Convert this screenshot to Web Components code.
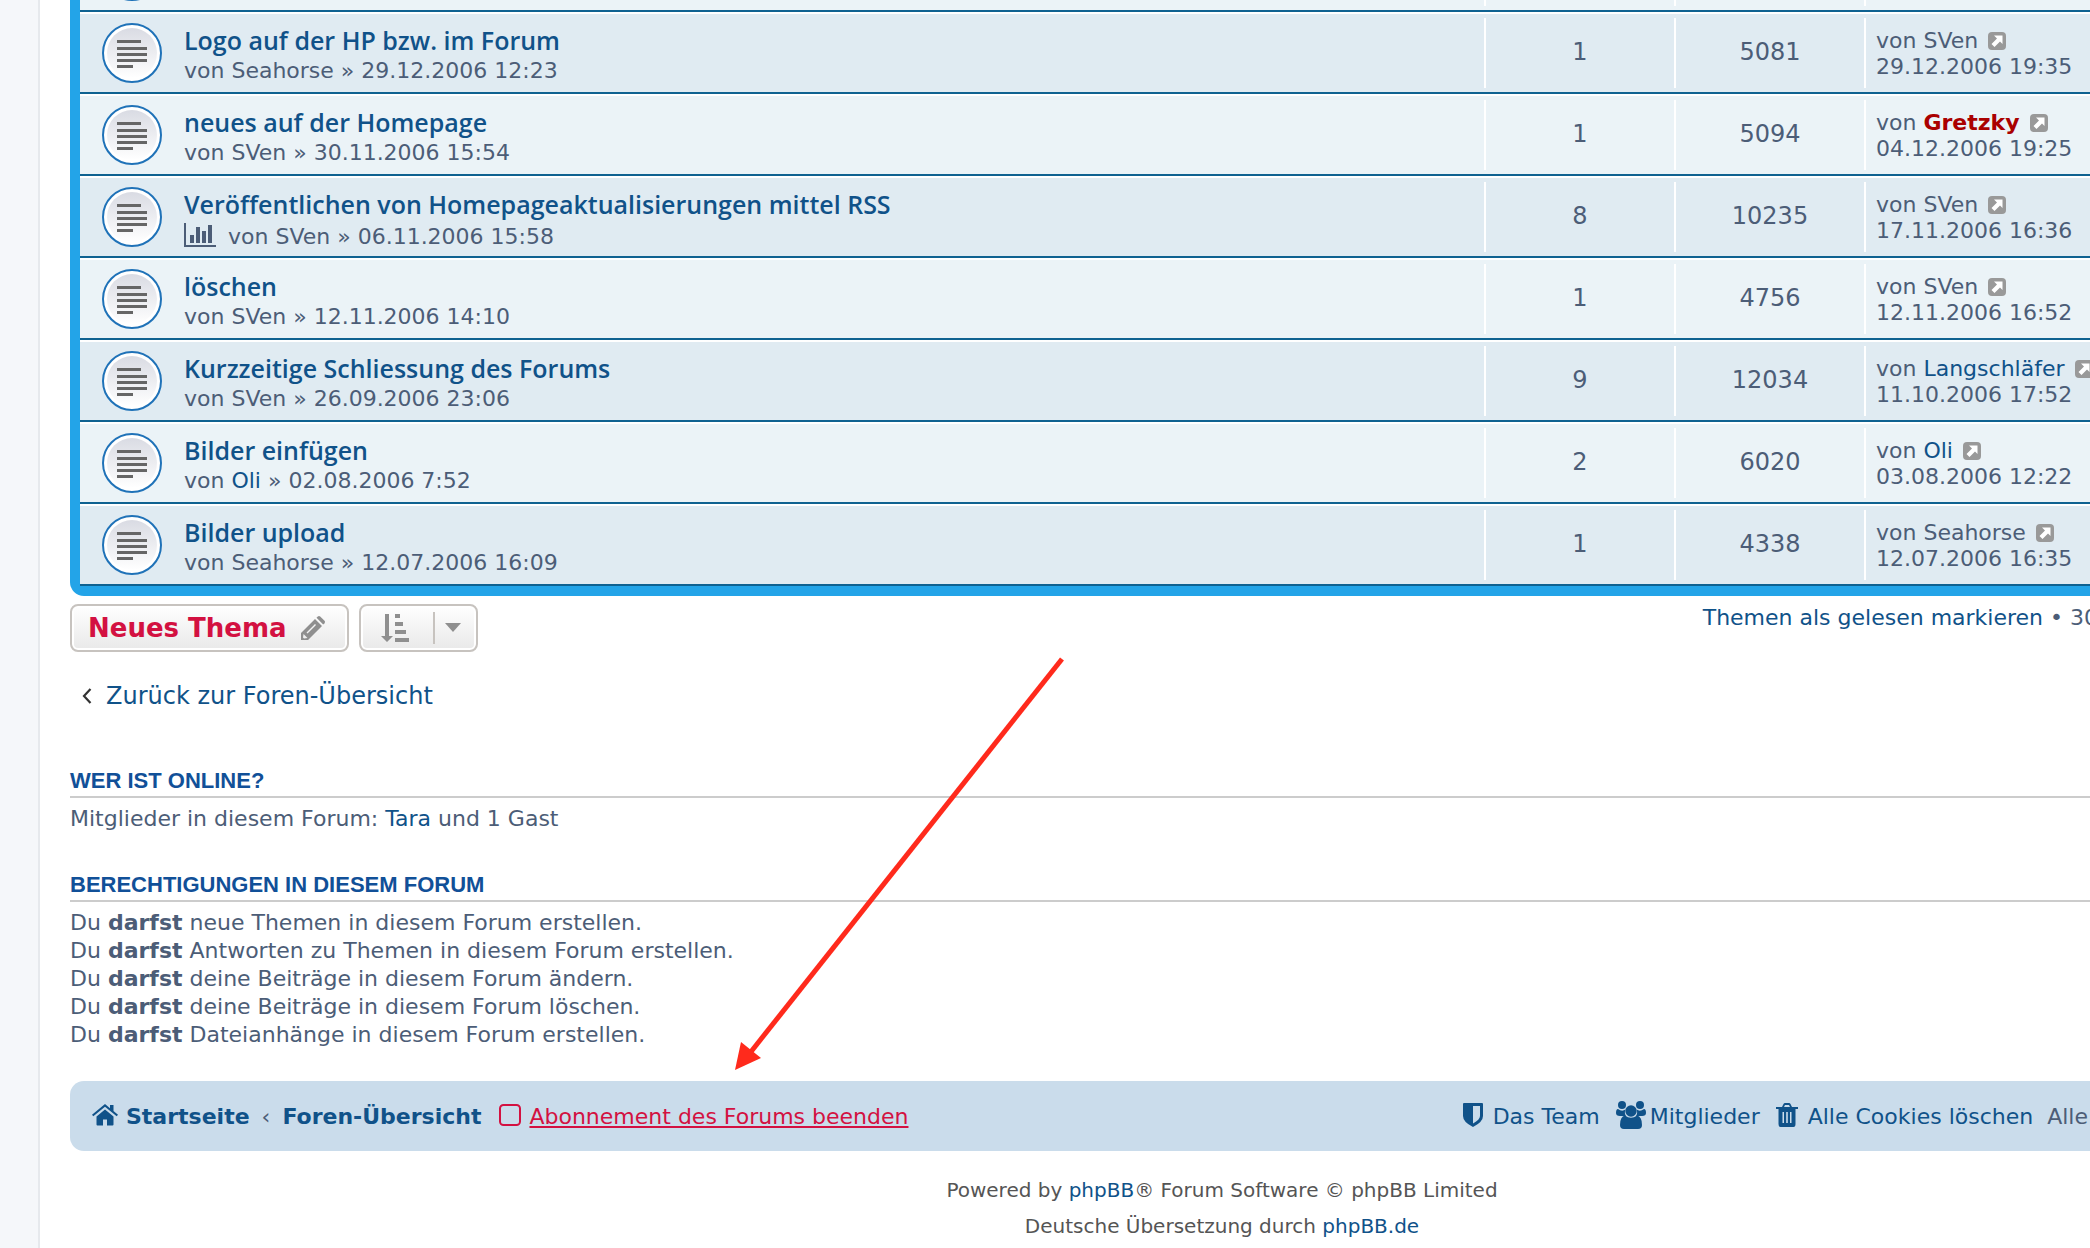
<!DOCTYPE html>
<html lang="de">
<head>
<meta charset="utf-8">
<title>Foren-Übersicht</title>
<style>
    body {
        margin: 0;
        overflow-x: hidden;
        background: #f5f7fa;
        color: #4c5d77;
        font-family: Verdana, "DejaVu Sans", sans-serif;
        font-size: 22px;
        line-height: 28px;
    }
</style>
</head>
<body>
<forum-page>
    <topic-list></topic-list>
    <action-bar></action-bar>
    <back-link href="#index">Zurück zur Foren-Übersicht</back-link>
    <stat-block>
        <span slot="title">Wer ist online?</span>
        Mitglieder in diesem Forum: <a href="#tara">Tara</a> und 1 Gast
    </stat-block>
    <stat-block>
        <span slot="title">Berechtigungen in diesem Forum</span>
        Du <strong>darfst</strong> neue Themen in diesem Forum erstellen.<br>
        Du <strong>darfst</strong> Antworten zu Themen in diesem Forum erstellen.<br>
        Du <strong>darfst</strong> deine Beiträge in diesem Forum ändern.<br>
        Du <strong>darfst</strong> deine Beiträge in diesem Forum löschen.<br>
        Du <strong>darfst</strong> Dateianhänge in diesem Forum erstellen.
    </stat-block>
    <nav-footer></nav-footer>
    <site-credits></site-credits>
    <pointer-arrow slot="overlay"></pointer-arrow>
</forum-page>

<script>
const icons = {
    topic: [60, 60, `
        <defs><linearGradient id="g" x1="0" y1="0" x2="0" y2="1">
            <stop offset="0" stop-color="#d9dbe3"/><stop offset="1" stop-color="#fff"/>
        </linearGradient></defs>
        <circle cx="30" cy="30" r="29" fill="#fff" stroke="#1f72b8" stroke-width="2"/>
        <circle cx="30" cy="30" r="25" fill="url(#g)"/>
        <path d="M15 17h24v3H15zM15 24h30v3H15zM15 30h30v3H15zM15 36h30v3H15zM15 42h16v3H15z" fill="#666"/>`],
    poll: [32, 28, '<path d="M0 0h2v22h30v2H0zM6 12h4v8H6zM12 4h4v16h-4zM18 8h4v12h-4zM24 2h4v18h-4z"/>'],
    external: [18, 18, `
        <rect width="18" height="18" rx="4" fill="#999"/>
        <path d="M6 3.500h8.500V12l-2.500-2.500-5.500 5.500-3-3L9 6.500z" fill="#fff"/>`],
    pencil: [24, 24, `
        <path fill-rule="evenodd" d="M0 24v-7L14 3l7 7L7 24zM2.500 18l-.5 3.500 1 1L6.500 22zM5.500 16.500l1 1 8.500-8.500-1-1z"/>
        <path d="M15.500 1.800 16.800.5q1.200-1 2.400 0L23.500 4.800q1 1.200 0 2.400l-1.300 1.300z"/>`],
    sort: [28, 28, '<path d="M4 0h4v22h4L6 28 0 22h4zM14 0h5v4h-5zM14 8h8v4h-8zM14 16h11v4H14zM14 24h14v4H14z"/>'],
    caret: [16, 10, '<path d="M0 0h16L8 9z"/>'],
    left: [10, 16, '<path d="M8.500 1 2 8l6.500 7" fill="none" stroke="#333" stroke-width="2.200"/>'],
    home: [26, 22, `
        <path d="M13 5.500 4.500 12.500V20.500q0 1 1 1H11v-6h4v6h5.500q1 0 1-1V12.500z"/>
        <path d="M13 0 0 10.800l1.300 1.500L13 2.800l11.700 9.500 1.300-1.500-4.500-3.800V1H18v3.200z"/>`],
    square: [22, 22, '<rect x="1" y="1" width="20" height="20" rx="3.500" fill="none" stroke="currentColor" stroke-width="2"/>'],
    shield: [20, 24, '<path fill-rule="evenodd" d="M1 0h18q1 0 1 1v12q0 6-10 11Q0 19 0 13V1q0-1 1-1zM10 3v17.500q7-4 7-7.500V3z"/>'],
    users: [30, 28, `
        <circle cx="6" cy="4" r="4"/><circle cx="24" cy="4" r="4"/>
        <path d="M2 8q4 3 7.500.5Q8 12 10 15H4q-4 0-4-3 0-4 2-4zM28 8q-4 3-7.500.5Q22 12 20 15h6q4 0 4-3 0-4-2-4z"/>
        <circle cx="15" cy="10" r="5.700"/>
        <path d="M9 14.500q6 4.500 12 0 5 1 5 9.500 0 4-4 4H8q-4 0-4-4 0-8.500 5-9.500z"/>`],
    trash: [22, 24, `
        <path fill-rule="evenodd" d="M2.500 5.500h17V21q0 3-2 3h-13q-2 0-2-3zM6.500 9v11H8V9zM10.200 9v11h1.600V9zM14 9v11h1.500V9z"/>
        <path d="M0 4h6l1.500-3q.5-1 1.500-1h4q1 0 1.500 1L16 4h6v2H0zm8 0h6l-1-2H9z"/>`]
};

const linkStyle = `
    a { color: #105289; text-decoration: none; }
    a:hover { text-decoration: underline; }
`;

class SiteIcon extends HTMLElement {
    constructor() {
        super();
        this.attachShadow({ mode: 'open' });
    }

    connectedCallback() {
        const [width, height, shape] = icons[this.getAttribute('name')];
        this.shadowRoot.innerHTML = `
            <style>
                :host { display: inline-block; flex: none; }
                svg { display: block; fill: currentColor; }
            </style>
            <svg width="${width}" height="${height}" viewBox="0 0 ${width} ${height}" aria-hidden="true">${shape}</svg>
        `;
    }
}

class ForumPage extends HTMLElement {
    constructor() {
        super();
        this.attachShadow({ mode: 'open' }).innerHTML = `
            <style>
                :host {
                    display: block;
                    position: relative;
                    overflow: hidden;
                    margin-left: 38px;
                    padding: 0 0 10px 30px;
                    border-left: 2px solid #e6e9ed;
                    background: #fff;
                }
            </style>
            <slot></slot>
            <slot name="overlay"></slot>
        `;
    }
}

const user = (name, color) => color ? `<a href="#user" style="color: ${color}; font-weight: bold">${name}</a>` : `<a href="#user">${name}</a>`;

const topics = [
    {},
    { title: 'Logo auf der HP bzw. im Forum', author: 'Seahorse', date: '29.12.2006 12:23', replies: 1, views: 5081, last: 'SVen', lastDate: '29.12.2006 19:35' },
    { title: 'neues auf der Homepage', author: 'SVen', date: '30.11.2006 15:54', replies: 1, views: 5094, last: user('Gretzky', '#aa0000'), lastDate: '04.12.2006 19:25' },
    { title: 'Veröffentlichen von Homepageaktualisierungen mittel RSS', poll: true, author: 'SVen', date: '06.11.2006 15:58', replies: 8, views: 10235, last: 'SVen', lastDate: '17.11.2006 16:36' },
    { title: 'löschen', author: 'SVen', date: '12.11.2006 14:10', replies: 1, views: 4756, last: 'SVen', lastDate: '12.11.2006 16:52' },
    { title: 'Kurzzeitige Schliessung des Forums', author: 'SVen', date: '26.09.2006 23:06', replies: 9, views: 12034, last: user('Langschläfer'), lastDate: '11.10.2006 17:52' },
    { title: 'Bilder einfügen', author: user('Oli'), date: '02.08.2006 7:52', replies: 2, views: 6020, last: user('Oli'), lastDate: '03.08.2006 12:22' },
    { title: 'Bilder upload', author: 'Seahorse', date: '12.07.2006 16:09', replies: 1, views: 4338, last: 'Seahorse', lastDate: '12.07.2006 16:35' }
];

class TopicList extends HTMLElement {
    constructor() {
        super();
        this.attachShadow({ mode: 'open' }).innerHTML = `
            <style>
                ${linkStyle}
                /* the list is scrolled, only the foot of the first row shows */
                :host {
                    display: block;
                    margin-top: -70px;
                    border-left: 10px solid #23a4e8;
                    border-bottom: 10px solid #23a4e8;
                    border-bottom-left-radius: 14px;
                }
                table { width: 100%; table-layout: fixed; border-spacing: 0; }
                .narrow { width: 190px; }
                .last { width: 226px; }
                td {
                    height: 70px;
                    padding: 4px 0;
                    border-top: 2px solid #fff;
                    border-bottom: 2px solid #0f6291;
                    background: #ebf3f7;
                }
                tr:nth-child(even) td { background: #e0ebf2; }
                .cell {
                    box-sizing: border-box;
                    height: 70px;
                    border-left: 2px solid #fff;
                    white-space: nowrap;
                }
                .count { font-size: 24px; line-height: 68px; text-align: center; }
                .post { padding: 10px 0 0 10px; line-height: 26px; }
                .post site-icon { margin-left: 3px; vertical-align: -2px; }
                .topic { display: flex; align-items: center; gap: 22px; height: 70px; padding-left: 22px; }
                .text { align-self: flex-start; padding-top: 8px; }
                .title { display: block; font: 650 25px/28px "Trebuchet MS", "Open Sans", sans-serif; }
                .by { display: flex; align-items: center; gap: 12px; margin-top: 3px; }
                .poll { height: 32px; }
            </style>
            <table>
                <colgroup><col><col class="narrow"><col class="narrow"><col class="last"></colgroup>
                <tbody>${topics.map(topic => this.row(topic)).join('')}</tbody>
            </table>
        `;
    }

    row(t) {
        if (!t.title) {
            return `
                <tr>
                    <td><div class="topic"><site-icon name="topic"></site-icon></div></td>
                    <td><div class="cell"></div></td>
                    <td><div class="cell"></div></td>
                    <td><div class="cell"></div></td>
                </tr>`;
        }
        return `
            <tr>
                <td>
                    <div class="topic">
                        <site-icon name="topic"></site-icon>
                        <div class="text">
                            <a class="title" href="#topic">${t.title}</a>
                            <div class="by ${t.poll ? 'poll' : ''}">
                                ${t.poll ? '<site-icon name="poll"></site-icon>' : ''}
                                <span>von ${t.author} » ${t.date}</span>
                            </div>
                        </div>
                    </div>
                </td>
                <td><div class="cell count">${t.replies}</div></td>
                <td><div class="cell count">${t.views}</div></td>
                <td>
                    <div class="cell post">
                        von ${t.last} <a href="#last" aria-label="Neuester Beitrag"><site-icon name="external"></site-icon></a><br>
                        ${t.lastDate}
                    </div>
                </td>
            </tr>`;
    }
}

class ActionBar extends HTMLElement {
    constructor() {
        super();
        this.attachShadow({ mode: 'open' }).innerHTML = `
            <style>
                ${linkStyle}
                :host { display: flex; align-items: flex-start; gap: 10px; margin-top: 8px; }
                button {
                    display: flex;
                    align-items: center;
                    box-sizing: border-box;
                    height: 48px;
                    padding: 0 16px;
                    border: 2px solid #c7c3bf;
                    border-radius: 8px;
                    background: linear-gradient(#fff, #e9e9e9);
                    box-shadow: inset 0 0 0 2px #fff;
                    color: #8f8f8f;
                    font: bold 26px/28px Verdana, "DejaVu Sans", sans-serif;
                }
                .new { gap: 14px; padding-right: 22px; }
                .new span { color: #d31141; }
                .sort { padding: 0 15px 0 20px; }
                .sort .caret { display: flex; align-items: center; height: 32px; margin-left: 24px; padding-left: 10px; border-left: 2px solid #c7c3bf; }
                /* the page count runs on past the window edge */
                .pages { margin: 0 -8px 0 auto; white-space: nowrap; }
            </style>
            <button class="new" type="button"><span>Neues Thema</span><site-icon name="pencil"></site-icon></button>
            <button class="sort" type="button" aria-label="Anzeige- und Sortierungs-Einstellungen">
                <site-icon name="sort"></site-icon>
                <div class="caret"><site-icon name="caret"></site-icon></div>
            </button>
            <div class="pages"><a href="#read">Themen als gelesen markieren</a> • 30</div>
        `;
    }
}

class BackLink extends HTMLElement {
    constructor() {
        super();
        this.attachShadow({ mode: 'open' }).innerHTML = `
            <style>
                ${linkStyle}
                :host { display: block; margin: 30px 0 57px; padding-left: 12px; font-size: 24px; }
                a { display: inline-flex; align-items: center; gap: 14px; }
            </style>
            <a href="${this.getAttribute('href')}"><site-icon name="left"></site-icon><slot></slot></a>
        `;
    }
}

class StatBlock extends HTMLElement {
    constructor() {
        super();
        this.attachShadow({ mode: 'open' }).innerHTML = `
            <style>
                :host { display: block; margin-bottom: 38px; }
                h3 {
                    margin: 0 0 7px;
                    padding-bottom: 1px;
                    border-bottom: 2px solid #ccc;
                    color: #115098;
                    font: bold 22px/28px Arial, "Liberation Sans", sans-serif;
                    text-transform: uppercase;
                }
                ::slotted(a) { color: #105289; text-decoration: none; }
            </style>
            <h3><slot name="title"></slot></h3>
            <slot></slot>
        `;
    }
}

class NavFooter extends HTMLElement {
    constructor() {
        super();
        this.attachShadow({ mode: 'open' }).innerHTML = `
            <style>
                ${linkStyle}
                :host { display: block; margin-top: -6px; }
                nav {
                    display: flex;
                    align-items: center;
                    box-sizing: border-box;
                    height: 70px;
                    padding: 2px 2px 0 22px;
                    border-radius: 14px 0 0 14px;
                    background: #cadceb;
                    white-space: nowrap;
                }
                a { display: flex; align-items: center; gap: 8px; }
                site-icon { padding-bottom: 4px; }
                .crumb { font-weight: bold; }
                .sep { margin: 0 12px; }
                .watch { margin-left: 18px; color: #d31141; text-decoration: none; }
                .watch span { text-decoration: underline; }
                .right { display: flex; align-items: center; gap: 16px; margin-left: auto; }
                .wide { gap: 10px; }
                .near { gap: 4px; }
                .zone { margin-left: -2px; }
            </style>
            <nav>
                <a class="crumb" href="#home"><site-icon name="home"></site-icon>Startseite</a>
                <span class="sep">‹</span>
                <a class="crumb" href="#index">Foren-Übersicht</a>
                <a class="watch" href="#unwatch"><site-icon name="square"></site-icon><span>Abonnement des Forums beenden</span></a>
                <div class="right">
                    <a class="wide" href="#team"><site-icon name="shield"></site-icon>Das Team</a>
                    <a class="near" href="#members"><site-icon name="users"></site-icon>Mitglieder</a>
                    <a class="wide" href="#cookies"><site-icon name="trash"></site-icon>Alle Cookies löschen</a>
                    <span class="zone">Alle</span>
                </div>
            </nav>
        `;
    }
}

class SiteCredits extends HTMLElement {
    constructor() {
        super();
        this.attachShadow({ mode: 'open' }).innerHTML = `
            <style>
                ${linkStyle}
                :host {
                    display: block;
                    margin-top: 21px;
                    padding-left: 284px;
                    color: #555;
                    font-size: 20px;
                    line-height: 36px;
                    text-align: center;
                }
            </style>
            Powered by <a href="#phpbb">phpBB</a>® Forum Software © phpBB Limited<br>
            Deutsche Übersetzung durch <a href="#phpbb-de">phpBB.de</a>
        `;
    }
}

class PointerArrow extends HTMLElement {
    constructor() {
        super();
        this.attachShadow({ mode: 'open' }).innerHTML = `
            <style>
                :host { position: absolute; left: 694px; top: 656px; pointer-events: none; }
                svg { display: block; }
            </style>
            <svg width="332" height="416" viewBox="0 0 332 416" aria-hidden="true">
                <path d="M328 3 16 397" stroke="#ff2a1c" stroke-width="5"/>
                <path d="M1 414 7 386 27 402z" fill="#ff2a1c"/>
            </svg>
        `;
    }
}

customElements.define('site-icon', SiteIcon);
customElements.define('forum-page', ForumPage);
customElements.define('topic-list', TopicList);
customElements.define('action-bar', ActionBar);
customElements.define('back-link', BackLink);
customElements.define('stat-block', StatBlock);
customElements.define('nav-footer', NavFooter);
customElements.define('site-credits', SiteCredits);
customElements.define('pointer-arrow', PointerArrow);
</script>
</body>
</html>
